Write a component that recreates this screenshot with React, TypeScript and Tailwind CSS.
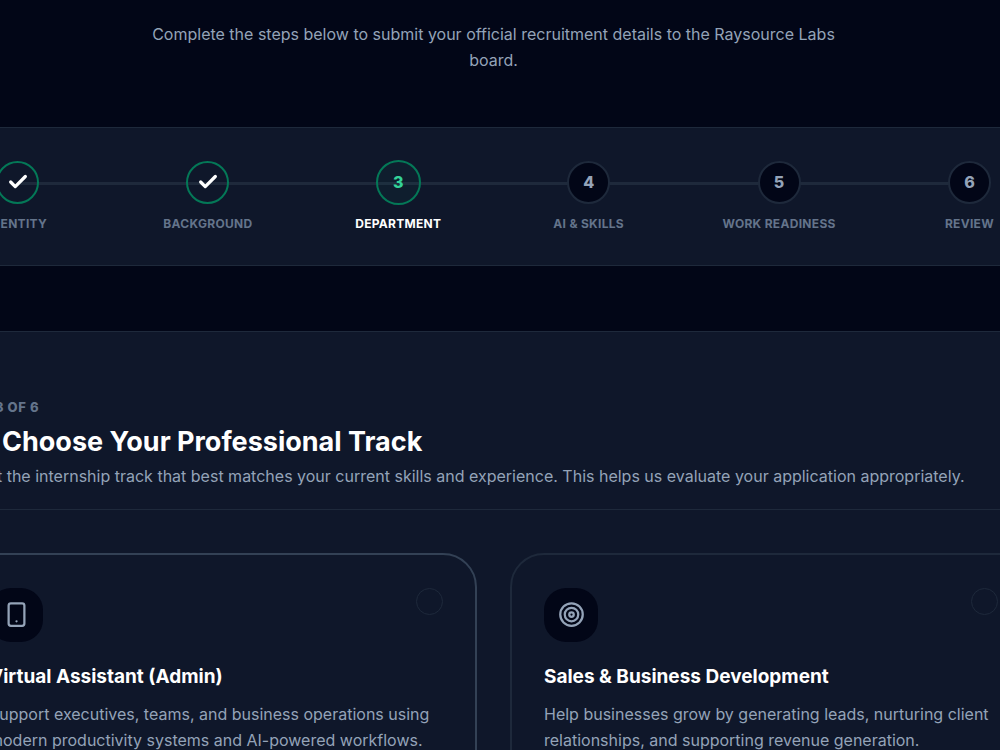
import React from 'react';
import { Check, Smartphone, Target, type LucideIcon } from 'lucide-react';

type StepState = 'done' | 'active' | 'todo';

interface Step {
  label: string;
  state: StepState;
}

interface Track {
  id: string;
  title: string;
  description: string;
  icon: LucideIcon;
}

const steps: Step[] = [
  { label: 'Identity', state: 'done' },
  { label: 'Background', state: 'done' },
  { label: 'Department', state: 'active' },
  { label: 'AI & Skills', state: 'todo' },
  { label: 'Work Readiness', state: 'todo' },
  { label: 'Review', state: 'todo' },
];

const tracks: Track[] = [
  {
    id: 'virtual-assistant',
    title: 'Virtual Assistant (Admin)',
    description:
      'Support executives, teams, and business operations using modern productivity systems and AI-powered workflows.',
    icon: Smartphone,
  },
  {
    id: 'sales',
    title: 'Sales & Business Development',
    description:
      'Help businesses grow by generating leads, nurturing client relationships, and supporting revenue generation.',
    icon: Target,
  },
];

const circleStyles: Record<StepState, string> = {
  done: 'size-[43px] border-[#047857] text-white',
  active: 'size-[45px] -m-px border-[#047857] bg-[#10b981]/5 text-[#34d399]',
  todo: 'size-[43px] border-[#1e293b] bg-[#020617] text-[#94a3b8]',
};

const Stepper: React.FC = () => (
  <nav aria-label="Progress" className="border-y border-[#1e293b] bg-[#0f172a] py-[33px]">
    <div className="relative -ml-[45px] -mr-8">
      {/* Connector behind the circles */}
      <div className="absolute left-[62px] right-[62px] top-[21px] h-[3px] bg-[#1e293b]" />
      <ol className="relative flex justify-between">
        {steps.map((step, index) => (
          <li key={step.label} className="flex w-[125px] flex-col items-center gap-3">
            <div
              className={`flex items-center justify-center rounded-full border-2 pb-0.5 text-base leading-6 font-extrabold ${circleStyles[step.state]}`}
            >
              {step.state === 'done' ? <Check size={22} strokeWidth={3.5} /> : index + 1}
            </div>
            <span
              className={`whitespace-nowrap text-xs font-bold uppercase tracking-wide ${
                step.state === 'active' ? 'text-white' : 'text-[#64748b]'
              }`}
            >
              {step.label}
            </span>
          </li>
        ))}
      </ol>
    </div>
  </nav>
);

const TrackCard: React.FC<{ track: Track; highlighted: boolean }> = ({ track, highlighted }) => {
  const Icon = track.icon;

  return (
    <label
      htmlFor={track.id}
      className={`block cursor-pointer rounded-[34px] border-2 p-8 pt-[33px] ${
        highlighted ? 'border-[#334155]' : 'border-[#1e293b]'
      }`}
    >
      <div className="flex items-start justify-between">
        <div className="flex size-[54px] justify-center rounded-[22px] bg-[#020617] pt-[13px] text-[#94a3b8]">
          <Icon size={27} strokeWidth={2} />
        </div>
        <input
          type="radio"
          id={track.id}
          name="track"
          className="size-[27px] appearance-none rounded-full border border-[#1e293b] checked:bg-[#10b981]"
        />
      </div>
      <h3 className="mt-[21px] text-[19px] leading-7 font-bold text-white">{track.title}</h3>
      <p className="mt-2.5 text-base leading-[26px] text-[#94a3b8]">{track.description}</p>
    </label>
  );
};

export default function App() {
  return (
    <div className="min-h-screen overflow-hidden bg-[#020617] font-['Inter',sans-serif]">
      <header className="-ml-[13px] pt-[21px] pb-[54px]">
        <p className="mx-auto max-w-[720px] text-center text-base leading-[26px] text-[#94a3b8]">
          Complete the steps below to submit your official recruitment details to the Raysource Labs board.
        </p>
      </header>

      <Stepper />

      <main className="mt-[65px] border-t border-[#1e293b] bg-[#0f172a] pt-[65px] pb-16">
        <div className="-ml-[45px] -mr-8">
          <p className="text-[13px] leading-5 font-extrabold uppercase tracking-wider text-[#64748b]">Step 3 of 6</p>
          <h2 className="mt-[7px] flex gap-2 text-[27px] leading-9 font-bold text-white">
            <span className="w-[39px]">🎯</span>
            Choose Your Professional Track
          </h2>
          <p className="mt-[3px] whitespace-nowrap text-base leading-[26px] text-[#94a3b8]">
            Select the internship track that best matches your current skills and experience. This helps us evaluate
            your application appropriately.
          </p>
        </div>

        <hr className="mt-5 border-[#1e293b]" />

        <div className="mt-[43px] -ml-[45px] -mr-8 grid grid-cols-2 gap-[33px]">
          {tracks.map((track, index) => (
            <TrackCard key={track.id} track={track} highlighted={index === 0} />
          ))}
        </div>
      </main>
    </div>
  );
}
